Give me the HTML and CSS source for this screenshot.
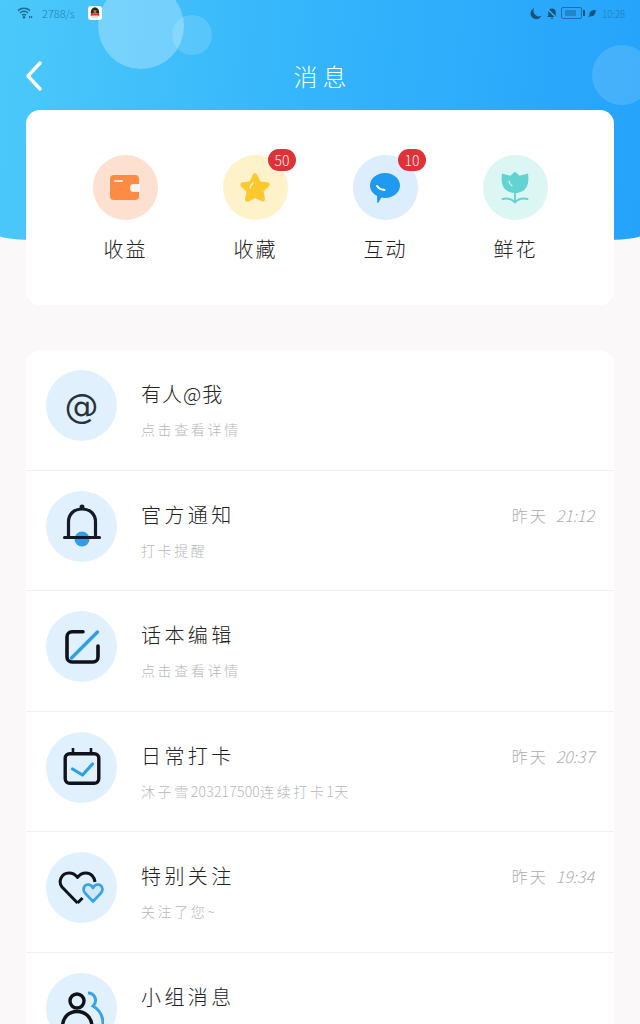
FILE: index.html
```html
<!DOCTYPE html>
<html lang="zh-CN">
<head>
    <meta charset="UTF-8">
    <meta name="viewport" content="width=device-width, initial-scale=1.0">
    <title>消息</title>
    <link rel="stylesheet" href="styles.css">
</head>
<body>
    <div class="hero">
        <span class="bubble bubble-big"></span>
        <span class="bubble bubble-small"></span>
        <span class="bubble bubble-right"></span>
    </div>

    <div class="status">
        <div class="status-side">
            <svg class="wifi" width="16" height="12" viewBox="0 0 16 12">
                <path d="M1 3.6C4.6.6 9.4.6 13 3.6M3 6C5.4 4 8.6 4 11 6M5 8.2c1.3-1 2.7-1 4 0" fill="none" stroke="#1b6a96" stroke-width="1.5"/>
                <circle cx="7" cy="10.2" r="1.3" fill="#1b6a96"/>
                <rect x="12" y="9" width="1.2" height="2.2" fill="#1b6a96"/>
                <rect x="14" y="9" width="1.2" height="2.2" fill="#1b6a96"/>
            </svg>
            <span class="speed">2788/s</span>
            <svg class="qq" width="14" height="14" viewBox="0 0 14 14">
                <rect width="14" height="14" rx="3" fill="#fff"/>
                <ellipse cx="7" cy="6.6" rx="4.2" ry="5.4" fill="#2b2622"/>
                <ellipse cx="7" cy="9.4" rx="3.2" ry="2.8" fill="#e8e2da"/>
                <path d="M3 7.2h8l.5 2.4H2.5z" fill="#d8392e"/>
                <path d="M5 4.6h4L7 6.2z" fill="#f0a12c"/>
            </svg>
        </div>
        <div class="status-side">
            <svg width="12" height="13" viewBox="0 0 13 13"><path d="M4.6.6A6 6 0 0 0 12.4 9 6.2 6.2 0 1 1 4.6.6z" fill="#17527d"/></svg>
            <svg width="12" height="13" viewBox="0 0 13 13">
                <path d="M6.5 1a4 4 0 0 1 4 4v3.6l1.2 1.6H1.3l1.2-1.6V5a4 4 0 0 1 4-4zM5 11h3l-1.5 1.6z" fill="#17527d"/>
                <path d="M1 1l11 11" stroke="#3bb0f5" stroke-width="1.6"/>
            </svg>
            <span class="battery"><span class="battery-fill"></span></span>
            <span class="battery-cap"></span>
            <svg width="8" height="9" viewBox="0 0 10 10"><path d="M9.6.6C9.8 6 7 9.2 2.4 8.4L1 9.8l-.7-.6L1.8 7.6C1 3 4.6.4 9.6.6z" fill="#17527d"/></svg>
            <span class="clock">10:28</span>
        </div>
    </div>

    <div class="nav">
        <svg class="back" width="20" height="32" viewBox="0 0 20 32"><path d="M16 3L4 16l12 13" fill="none" stroke="#fff" stroke-width="3.4" stroke-linecap="round" stroke-linejoin="round"/></svg>
        <div class="nav-title">消息</div>
    </div>

    <div class="quick card">
        <div class="tile">
            <div class="tile-icon tint-orange">
                <svg width="30" height="26" viewBox="0 0 30 26">
                    <rect width="29" height="25" rx="4" fill="#fb8b45"/>
                    <rect x="4" y="5" width="9" height="2" rx="1" fill="#fde3d0"/>
                    <path d="M30 9h-6a4 4 0 0 0 0 8h6z" fill="#fff4ec"/>
                </svg>
            </div>
            <div class="tile-label">收益</div>
        </div>
        <div class="tile">
            <div class="tile-icon tint-yellow">
                <svg width="34" height="34" viewBox="0 0 32 32">
                    <path d="M16 2c1 0 1.7.6 2.2 1.700l2.8 6.200 6.500.8c2.300.3 3 2.200 1.400 3.800l-4.900 4.600 1.300 6.700c.4 2.300-1.300 3.500-3.300 2.400L16 25.300l-6 3.300c-2 1.100-3.700-.1-3.300-2.400L8 19.500 3.100 14.900C1.500 13.300 2.200 11 4.500 10.700l6.500-.8 2.800-6.200C14.300 2.600 15 2 16 2z" fill="#fbc92d"/>
                    <path d="M11.500 16c.3-2 1.200-3.600 2.700-4.800" fill="none" stroke="#fff3c4" stroke-width="1.300" stroke-linecap="round"/>
                </svg>
            </div>
            <span class="badge">50</span>
            <div class="tile-label">收藏</div>
        </div>
        <div class="tile">
            <div class="tile-icon tint-blue">
                <svg width="32" height="32" viewBox="0 0 32 32">
                    <path d="M16 1c8.500 0 15 5.600 15 12.600S24.500 26 16 26c-1.300 0-2.500-.1-3.600-.4L9.500 30.500c-.5.800-1.400.5-1.400-.4v-6C3.700 21.800 1 18 1 13.600 1 6.600 7.500 1 16 1z" fill="#1e9bf0"/>
                    <path d="M8 14c1.500 2.300 4 3.600 7.500 4" fill="none" stroke="#fff" stroke-width="2" stroke-linecap="round"/>
                </svg>
            </div>
            <span class="badge">10</span>
            <div class="tile-label">互动</div>
        </div>
        <div class="tile">
            <div class="tile-icon tint-green">
                <svg width="28" height="33" viewBox="0 0 28 33">
                    <path d="M14 .5l4.500 4.300L27 2.500c.8 6 .4 10-1.500 13.500-2 3.500-6 6-11.500 6S4.500 19.500 2.500 16C.6 12.500.2 8.500 1 2.500l8.500 2.300z" fill="#62d3d0"/>
                    <path d="M8 10c.3 2.200 1.300 3.800 3 4.800" fill="none" stroke="#e2f8f6" stroke-width="1.200" stroke-linecap="round"/>
                    <path d="M14 22v9M1.500 28c5-1.200 9.500 0 12.500 3.500 3-3.500 7.500-4.700 12.500-3.500" fill="none" stroke="#62d3d0" stroke-width="1.800" stroke-linecap="round"/>
                </svg>
            </div>
            <div class="tile-label">鲜花</div>
        </div>
    </div>

    <div class="list card">
        <div class="row">
            <div class="row-icon"><span class="at-sign">@</span></div>
            <div class="row-body">
                <div class="row-title row-title-tight">有人@我</div>
                <div class="row-sub">点击查看详情</div>
            </div>
        </div>
        <div class="row">
            <div class="row-icon">
                <svg width="40" height="44" viewBox="0 0 40 44">
                    <circle cx="20" cy="35" r="7.5" fill="#2f9ee8"/>
                    <path d="M6.500 33V18C6.500 10 12 5 20 5s13.500 5 13.500 13v15" fill="none" stroke="#141a26" stroke-width="3.2"/>
                    <circle cx="20" cy="3" r="2.5" fill="#141a26"/>
                    <path d="M2.500 33.500h35" stroke="#141a26" stroke-width="3" stroke-linecap="round"/>
                </svg>
            </div>
            <div class="row-body">
                <div class="row-title">官方通知</div>
                <div class="row-sub">打卡提醒</div>
            </div>
            <div class="row-time">昨天<span class="row-clock">21:12</span></div>
        </div>
        <div class="row">
            <div class="row-icon">
                <svg width="36" height="36" viewBox="0 0 36 36">
                    <path d="M19 2.800H8a5 5 0 0 0-5 5V28a5 5 0 0 0 5 5h21a5 5 0 0 0 5-5V17" fill="none" stroke="#0f1218" stroke-width="3.6" stroke-linecap="round"/>
                    <path d="M7.500 29L33.500 3" stroke="#2f9ee8" stroke-width="3.4" stroke-linecap="round"/>
                </svg>
            </div>
            <div class="row-body">
                <div class="row-title">话本编辑</div>
                <div class="row-sub">点击查看详情</div>
            </div>
        </div>
        <div class="row">
            <div class="row-icon">
                <svg width="40" height="40" viewBox="0 0 40 40">
                    <rect x="3.2" y="6.700" width="33.600" height="29.600" rx="4.500" fill="none" stroke="#0f1218" stroke-width="3.4"/>
                    <path d="M11 1v7M29 1v7" stroke="#0f1218" stroke-width="2.6"/>
                    <path d="M10.500 22l10 6 10-11" fill="none" stroke="#2f9ee8" stroke-width="3.2" stroke-linecap="round" stroke-linejoin="round"/>
                </svg>
            </div>
            <div class="row-body">
                <div class="row-title">日常打卡</div>
                <div class="row-sub">沐子雪<span class="row-num">203217500</span>连续打卡<span class="row-num">1</span>天</div>
            </div>
            <div class="row-time">昨天<span class="row-clock">20:37</span></div>
        </div>
        <div class="row">
            <div class="row-icon">
                <svg width="48" height="36" viewBox="0 0 48 36">
                    <path d="M19.500 33L4 17C0 12 3 3 11 3c3.500 0 6.500 1.500 8.500 4.500C21.500 4.500 24.500 3 28 3c5 0 8.500 4 9 9" fill="none" stroke="#10131a" stroke-width="3" stroke-linejoin="round"/>
                    <path d="M19.500 33l5-5" stroke="#10131a" stroke-width="3"/>
                    <path d="M35 31.500L27 23c-3.500-4.500 0-8.500 3-8.500 2 0 4 1 5 3.500 1-2.500 3-3.500 5-3.500 3 0 6.500 4 3 8.500z" fill="#cfe8fa" stroke="#35a3e6" stroke-width="2.6" stroke-linejoin="round"/>
                </svg>
            </div>
            <div class="row-body">
                <div class="row-title">特别关注</div>
                <div class="row-sub">关注了您~</div>
            </div>
            <div class="row-time">昨天<span class="row-clock">19:34</span></div>
        </div>
        <div class="row">
            <div class="row-icon">
                <svg width="44" height="44" viewBox="0 0 44 44">
                    <path d="M28 7c7 0 10 8 5 13 7 4 10 10 10 18v6" fill="none" stroke="#35a3e6" stroke-width="3"/>
                    <circle cx="17" cy="15" r="7" fill="none" stroke="#10131a" stroke-width="3.4"/>
                    <path d="M2.500 44v-3C2.500 31 9 25.500 17 25.500S32 31 32 41v3z" fill="none" stroke="#10131a" stroke-width="3.4" stroke-linejoin="round"/>
                </svg>
            </div>
            <div class="row-body">
                <div class="row-title">小组消息</div>
            </div>
        </div>
    </div>
</body>
</html>
```

FILE: styles.css
```css
html, body {
    height: 100%;
}

body {
    position: relative;
    margin: 0;
    height: 1024px;
    overflow: hidden;
    background-color: #faf8f9;
    font-family: "Noto Sans CJK SC", "Noto Sans", sans-serif;
    font-weight: 300;
    color: #222;
}

/* blue header behind the first card */
.hero {
    position: absolute;
    top: 0;
    left: 0;
    width: 100%;
    height: 246px;
    overflow: hidden;
    background: linear-gradient(95deg, #4cc9fa 0%, #33b4fb 50%, #25a3fb 100%);
    border-radius: 0 0 50% 50% / 0 0 10px 10px;
}

.bubble {
    position: absolute;
    border-radius: 50%;
}

.bubble-big {
    left: 98px;
    top: -17px;
    width: 86px;
    height: 86px;
    background-color: rgba(255, 255, 255, 0.28);
}

.bubble-small {
    left: 172px;
    top: 15px;
    width: 40px;
    height: 40px;
    background-color: rgba(255, 255, 255, 0.15);
}

.bubble-right {
    left: 592px;
    top: 45px;
    width: 60px;
    height: 60px;
    background-color: rgba(255, 255, 255, 0.14);
}

.status {
    position: relative;
    display: flex;
    justify-content: space-between;
    height: 26px;
    padding: 0 15px 0 17px;
}

.status-side {
    display: flex;
    align-items: center;
}

.speed {
    margin-left: 9px;
    margin-right: 13px;
    font-size: 11px;
    color: #1f7fb5;
}

.status-side > svg + svg {
    margin-left: 4px;
}

.battery {
    display: block;
    box-sizing: border-box;
    width: 21px;
    height: 12px;
    margin-left: 3px;
    padding: 2px 5px 2px 3px;
    border: 1px solid #1f6fa8;
    border-radius: 2px;
}

.battery-fill {
    display: block;
    height: 100%;
    background-color: rgba(23, 82, 125, 0.4);
}

.battery-cap {
    display: block;
    width: 2px;
    height: 6px;
    margin: 0 3px 0 1px;
    background-color: #17527d;
}

.clock {
    margin-left: 6px;
    font-size: 10px;
    letter-spacing: -0.2px;
    color: #1f7fb5;
}

.nav {
    position: relative;
    display: flex;
    align-items: center;
    justify-content: center;
    height: 52px;
    margin-top: 24px;
}

.back {
    position: absolute;
    left: 24px;
    top: 10px;
}

.nav-title {
    padding-left: 5px;
    font-size: 24px;
    letter-spacing: 5px;
    line-height: 52px;
    color: #fff;
}

.card {
    position: relative;
    margin: 0 26px;
    background-color: #fff;
    border-radius: 14px;
}

.quick {
    display: grid;
    grid-template-columns: repeat(4, 130px);
    justify-content: center;
    box-sizing: border-box;
    height: 195px;
    margin-top: 8px;
    padding-top: 45px;
}

.tile {
    position: relative;
    display: flex;
    flex-direction: column;
    align-items: center;
}

.tile-icon {
    display: flex;
    align-items: center;
    justify-content: center;
    width: 65px;
    height: 65px;
    border-radius: 50%;
}

.tint-orange {
    background-color: #fde0cf;
}

.tint-yellow {
    background-color: #fef2cb;
}

.tint-blue {
    background-color: #dcedfd;
}

.tint-green {
    background-color: #dcf6f3;
}

.tile-label {
    margin-top: 15px;
    padding-left: 1px;
    font-size: 20px;
    line-height: 28px;
    letter-spacing: 2px;
}

/* count on top of the icon */
.badge {
    position: absolute;
    left: 78px;
    top: -6px;
    width: 28px;
    height: 22px;
    border-radius: 11px;
    background-color: #dc3238;
    font-size: 14px;
    line-height: 22px;
    text-align: center;
    color: #fdeaea;
}

.list {
    margin-top: 45px;
}

.row {
    display: flex;
    align-items: flex-start;
    box-sizing: border-box;
    height: 120.5px;
    padding: 20px 20px 0;
    border-bottom: 1px solid #f3f1f2;
}

.row-icon {
    display: flex;
    align-items: center;
    justify-content: center;
    flex: none;
    width: 71px;
    height: 71px;
    border-radius: 50%;
    background-color: #e0f1fd;
}

.row-body {
    flex: 1;
    margin-left: 24px;
    padding-top: 10px;
}

.row-title {
    font-size: 20px;
    line-height: 28px;
    letter-spacing: 3.4px;
}

.row-title-tight {
    letter-spacing: 1px;
}

.row-sub {
    margin-top: 11px;
    font-size: 14px;
    line-height: 20px;
    letter-spacing: 2.6px;
    color: #b8b8b8;
}

.row-num {
    letter-spacing: 0.2px;
}

.row-time {
    padding-top: 11px;
    font-size: 16px;
    line-height: 26px;
    letter-spacing: 2px;
    color: #aeaeae;
}

.row-clock {
    margin-left: 8px;
    font-style: italic;
    letter-spacing: 0;
}

.at-sign {
    font-family: "DejaVu Sans", sans-serif;
    font-size: 34px;
    font-weight: 400;
    line-height: 40px;
    color: #2a3240;
}
```
